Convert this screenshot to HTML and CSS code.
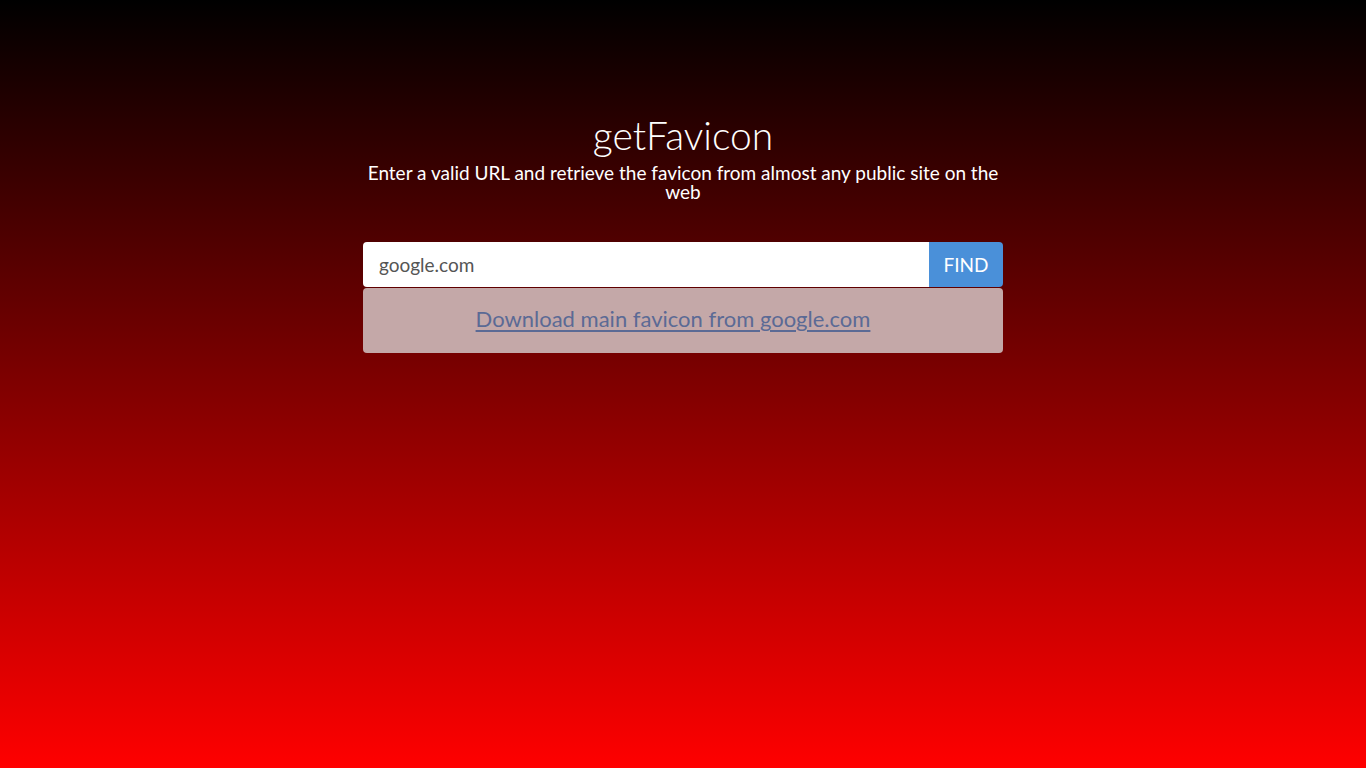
FILE: index.html
```html
<!DOCTYPE html>
<html>
<head>
<meta charset="utf-8">
<link rel="stylesheet" href="styles.css">
</head>
<body>
<main class="wrap">
  <h1 class="title">getFavicon</h1>
  <p class="subtitle">Enter a valid URL and retrieve the favicon from almost any public site on the web</p>
  <form class="search">
    <input class="field" type="text" value="google.com">
    <button class="find" type="button">FIND</button>
  </form>
  <div class="result">
    <a class="dl" href="#">Download main favicon from google.com</a>
  </div>
</main>
</body>
</html>
```
FILE: styles.css
```css
html, body {
  margin: 0;
  height: 100%;
}
body {
  background: linear-gradient(to bottom, #000000 0%, #ff0000 100%);
  font-family: Lato, "Open Sans", sans-serif;
  color: #fff;
}
.wrap {
  width: 640px;
  margin: 0 auto;
  padding-top: 114px;
  display: flex;
  flex-direction: column;
}
.title {
  margin: 0;
  font-size: 39px;
  font-weight: 300;
  text-align: center;
  line-height: 43px;
}
.subtitle {
  margin: 6px 0 0;
  font-size: 19px;
  line-height: 19px;
  text-align: center;
  padding: 0 4px;
}
.search {
  margin: 41px 0 0;
  display: flex;
  height: 45px;
}
.field {
  flex: 1;
  border: none;
  border-radius: 4px 0 0 4px;
  padding: 0 16px;
  font-family: inherit;
  font-size: 19px;
  font-weight: 400;
  color: #555;
  background: #fff;
  outline: none;
}
.find {
  width: 74px;
  border: none;
  border-radius: 0 4px 4px 0;
  background: #4a90d9;
  color: #fff;
  font-family: inherit;
  font-size: 19px;
  padding: 0;
}
.result {
  margin-top: 1px;
  height: 65px;
  box-sizing: border-box;
  border-radius: 4px;
  background: #c4a8a8;
  display: flex;
  align-items: center;
  justify-content: center;
  padding: 0 20px 4px 0;
}
.dl {
  color: #5b6a95;
  font-size: 22px;
  font-weight: 400;
  text-decoration: underline;
  text-underline-offset: 3px;
}
```
